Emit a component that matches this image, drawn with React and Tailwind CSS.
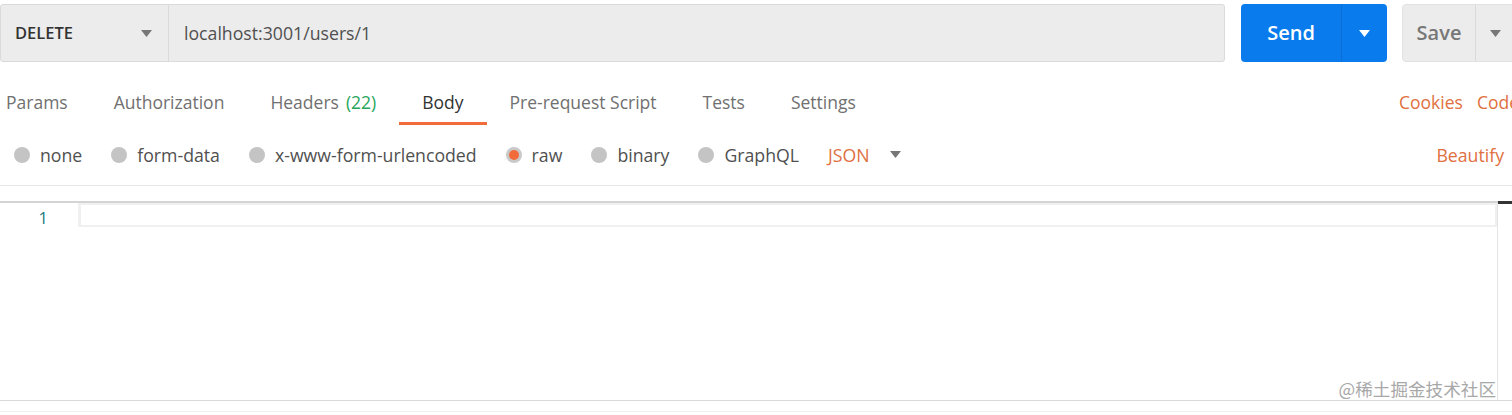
import React from 'react';

const Caret = ({ className = '' }) => (
  <svg width="11" height="7" viewBox="0 0 11 7" className={className}>
    <path d="M0 0 L11 0 L5.5 7 Z" fill="currentColor" />
  </svg>
);

const Radio = ({ label, checked }) => (
  <div className="flex items-center gap-[10px] mr-[29px]">
    {checked ? (
      <span className="w-[16px] h-[16px] rounded-full bg-[#c9c9c9] flex items-center justify-center">
        <span className="w-[10px] h-[10px] rounded-full bg-[#f26b3a]" />
      </span>
    ) : (
      <span className="w-[16px] h-[16px] rounded-full bg-[#c4c4c4]" />
    )}
    <span className="text-[17.7px] text-[#505050]">{label}</span>
  </div>
);

export default function App() {
  const tabs = ['Params', 'Authorization', 'Headers', 'Body', 'Pre-request Script', 'Tests', 'Settings'];

  return (
    <div className="w-[1512px] h-[415px] bg-white overflow-hidden font-['Open_Sans',sans-serif] flex flex-col">
      {/* Barra de petición */}
      <div className="flex items-stretch h-[58px] mt-[4px] shrink-0">
        <div className="flex w-[1225px] shrink-0 border border-[#dadada] rounded-[3px] bg-[#ececec]">
          <div className="w-[168px] flex items-center justify-between pl-[14px] pr-[16px] border-r border-[#dadada]">
            <span className="text-[16.5px] font-semibold text-[#333]">DELETE</span>
            <Caret className="text-[#777]" />
          </div>
          <div className="flex-1 flex items-center pl-[15px] text-[17.7px] text-[#505050]">localhost:3001/users/1</div>
        </div>
        <div className="ml-[16px] w-[146px] shrink-0 flex rounded-[4px] bg-[#097bed] text-white">
          <div className="w-[101px] flex items-center justify-center text-[20px] font-semibold border-r border-[#0a6fd6]">Send</div>
          <div className="flex-1 flex items-center justify-center"><Caret /></div>
        </div>
        <div className="ml-[15px] w-[130px] shrink-0 flex rounded-[4px] bg-[#ececec] border border-[#e2e2e2]">
          <div className="w-[73px] flex items-center justify-center text-[20px] font-semibold text-[#777] border-r border-[#dadada]">Save</div>
          <div className="flex-1 flex items-center pl-[14px]"><Caret className="text-[#777]" /></div>
        </div>
      </div>

      {/* Pestañas */}
      <div className="flex items-stretch h-[63px] shrink-0">
        <div className="flex ml-[-17px]">
          {tabs.map((t) => (
            <div
              key={t}
              className={`px-[23px] pt-[20px] flex items-center text-[17.5px] border-b-[3px] ${t === 'Body' ? 'border-[#f26b3a] text-[#333]' : 'border-transparent text-[#707070]'}`}
            >
              {t}
              {t === 'Headers' && <span className="ml-[7px] text-[#26a65b]">(22)</span>}
            </div>
          ))}
        </div>
        <div className="ml-auto flex items-center pt-[17px] gap-[14px] text-[17.5px] text-[#e0703f] mr-[-7px]">
          <span>Cookies</span>
          <span>Code</span>
        </div>
      </div>

      {/* Tipos de body */}
      <div className="flex items-center h-[61px] shrink-0 pl-[14px] pr-[8px] border-b border-[#e6e6e6]">
        <Radio label="none" />
        <Radio label="form-data" />
        <Radio label="x-www-form-urlencoded" />
        <Radio label="raw" checked />
        <Radio label="binary" />
        <Radio label="GraphQL" />
        <div className="flex items-center gap-[20px] text-[17.7px] text-[#e0703f]">
          <span>JSON</span>
          <Caret className="text-[#777]" />
        </div>
        <span className="ml-auto text-[17.7px] text-[#e0703f]">Beautify</span>
      </div>

      {/* Editor */}
      <div className="mt-[15px] flex-1 flex flex-col">
        <div className="h-[2px] bg-[#d4d4d4] flex justify-end">
          <div className="w-[14px] h-[3px] bg-[#333]" />
        </div>
        <div className="flex flex-1 border-b border-[#d9d9d9]">
          <div className="w-[78px] pt-[3px] pr-[30px] text-right text-[16.5px] text-[#237a7a]">1</div>
          <div className="flex-1 flex flex-col border-r border-[#e4e4e4]">
            <div className="h-[24px] border-2 border-[#f0f0f0] border-l-[3px]" />
            <div className="flex-1 flex items-end justify-end">
              <span className="text-[17.6px] leading-[22px] text-[#a8a8a8] font-['Noto_Sans_CJK_SC',sans-serif] mr-[1px]">@稀土掘金技术社区</span>
            </div>
          </div>
          <div className="w-[14px]" />
        </div>
        <div className="h-[11px] border-b border-[#f0f0f0]" />
        <div className="h-[3px]" />
      </div>
    </div>
  );
}
